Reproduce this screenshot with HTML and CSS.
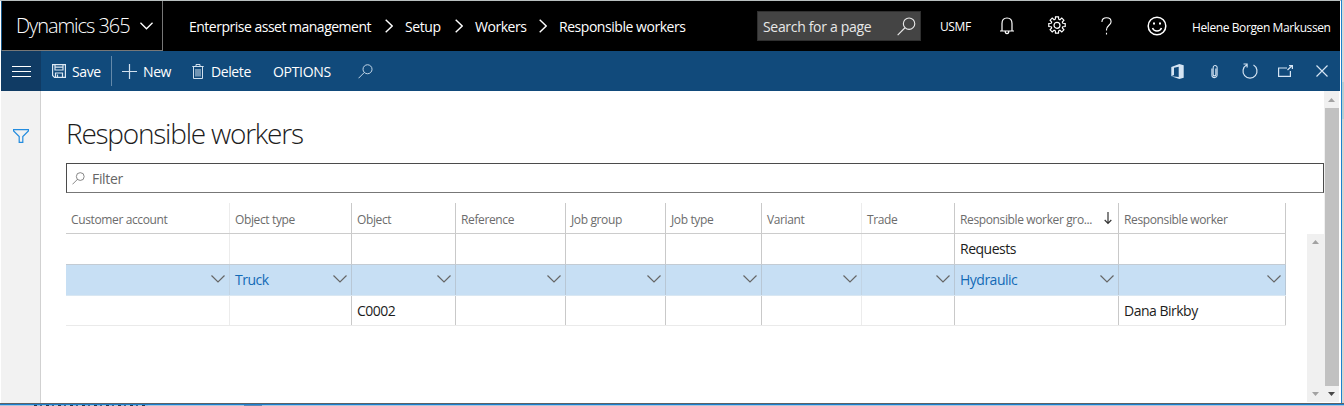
FILE: index.html
```html
<!DOCTYPE html>
<html lang="en">
<head>
<meta charset="utf-8">
<title>Responsible workers</title>
<link rel="stylesheet" href="styles.css">
</head>
<body>
<svg class="defs" width="0" height="0">
  <symbol id="down" viewBox="0 0 14 8"><path d="M.5.5 7 7 13.500.5"/></symbol>
  <symbol id="right" viewBox="0 0 8 14"><path d="M.7.7 7.200 7 .7 13.300"/></symbol>
  <symbol id="search" viewBox="0 0 20 20"><circle cx="12.700" cy="7" r="6"/><path d="M8.400 11.300.7 19"/></symbol>
</svg>
<div class="window">
  <header class="topbar">
    <div class="brand"><span class="brand-name">Dynamics 365</span><svg class="icon brand-arrow"><use href="#down"/></svg></div>
    <nav class="crumbs">
      <span class="c1">Enterprise asset management</span><svg class="icon sep"><use href="#right"/></svg>
      <span class="c2">Setup</span><svg class="icon sep"><use href="#right"/></svg>
      <span class="c3">Workers</span><svg class="icon sep"><use href="#right"/></svg>
      <span class="c4">Responsible workers</span>
    </nav>
    <div class="page-search"><span class="search-label">Search for a page</span><svg class="icon search-icon"><use href="#search"/></svg></div>
    <span class="company">USMF</span>
    <svg class="icon bell" viewBox="0 0 14 18"><path d="M2 14V6.500C2 3 4 1 7 1s5 2 5 5.500V14M0 14h14M5.200 14.300c0 3 3.600 3 3.600 0"/></svg>
    <svg class="icon gear" viewBox="0 0 20 20"><path d="M8.300 3.200 8.500.8h3l.2 2.400 1.200.5 1.900-1.600 2.100 2.100-1.600 1.900.5 1.200 2.400.2v3l-2.400.2-.5 1.200 1.600 1.900-2.100 2.100-1.900-1.600-1.200.5-.2 2.400h-3l-.2-2.400-1.200-.5-1.900 1.600-2.100-2.100 1.600-1.900-.5-1.200-2.400-.2v-3l2.400-.2.5-1.200-1.600-1.900 2.100-2.100 1.900 1.600z"/><circle cx="10" cy="9.300" r="3"/></svg>
    <svg class="icon help" viewBox="0 0 12 20"><path d="M1 5.500C1 2.500 3 1 6 1s5 1.700 5 4.300C11 9 6 9.500 6 14v1M6 17.300v2"/></svg>
    <svg class="icon smile" viewBox="0 0 20 20"><circle cx="10" cy="10" r="8.800"/><path d="M5.500 12c1.500 4 7.500 4 9 0"/><path class="eyes" d="M6 6.500h2v2H6zM12 6.500h2v2h-2z"/></svg>
    <span class="user">Helene Borgen Markussen</span>
  </header>
  <div class="actions">
    <div class="menu"><i></i><i></i><i></i></div>
    <svg class="icon save" viewBox="0 0 14 14"><path d="M.6.6h12.800v12.800H2.500L.6 11.500zM3 .6v5.400h8V.6M3.500 13.400V9h7v4.400M5.500 10.500v3M3 3.200h8"/></svg><span class="save-t">Save</span>
    <span class="rule"></span>
    <svg class="icon plus" viewBox="0 0 15 15"><path d="M7.500 0v15M0 7.500h15"/></svg><span class="new-t">New</span>
    <svg class="icon trash" viewBox="0 0 12 15"><path d="M.3 2.500h11.400M4 2.500v-2h4v2M1.500 2.500v12h9v-12M4 5v7.500M6 5v7.500M8 5v7.500"/></svg><span class="del-t">Delete</span>
    <span class="opt-t">OPTIONS</span>
    <svg class="icon act-search"><use href="#search"/></svg>
    <div class="tools">
      <svg class="office" viewBox="0 0 13 15"><path d="M.3 3 8.300 0 12.700 1.200v12.600L8.300 15 .3 12.200l7.400.7V2.700L3 3.800v7.200L.3 12.200z"/></svg>
      <svg class="icon clip" viewBox="0 0 8 15"><path d="M1 4v7.500c0 4 6 4 6 0V3c0-3-4.500-3-4.500 0v8c0 2 3 2 3 0V4"/></svg>
      <svg class="icon refresh" viewBox="0 0 16 16"><path d="M11.500 2A7 7 0 1 1 4.500 2M1.500 1h3.600v3.600"/></svg>
      <svg class="icon popout" viewBox="0 0 15 12"><path d="M9 3H.6v8.400h11.800V6M9.500 5 14 .7M11 .6H14.400V4"/></svg>
      <svg class="icon close" viewBox="0 0 12 12"><path d="m.5.5 11 11M11.500.5.5 11.500"/></svg>
    </div>
  </div>
  <div class="body">
    <aside class="rail"><svg class="icon funnel" viewBox="0 0 16 14"><path d="M.6.6h14.800v1.300L9.800 7.500v5.900H6.200V7.500L.6 1.900z"/></svg></aside>
    <main class="content">
      <h1>Responsible workers</h1>
      <div class="filter"><svg class="icon filter-icon"><use href="#search"/></svg><span>Filter</span></div>
      <div class="list">
        <div class="grid head">
          <div class="faint"><span>Customer account</span></div><div><span>Object type</span></div><div><span>Object</span></div><div><span>Reference</span></div><div><span>Job group</span></div><div><span>Job type</span></div><div class="faint"><span>Variant</span></div><div><span>Trade</span></div><div><span>Responsible worker gro...</span><svg class="icon sort" viewBox="0 0 8 12"><path d="M4 0v11.200M.7 8 4 11.300 7.300 8"/></svg></div><div><span>Responsible worker</span></div>
        </div>
        <div class="grid row first"><div class="faint"></div><div></div><div></div><div></div><div></div><div></div><div class="faint"></div><div></div><div><span>Requests</span></div><div></div></div>
        <div class="grid row selected">
          <div class="faint"><svg class="icon drop"><use href="#down"/></svg></div>
          <div><span>Truck</span><svg class="icon drop"><use href="#down"/></svg></div>
          <div><svg class="icon drop"><use href="#down"/></svg></div>
          <div><svg class="icon drop"><use href="#down"/></svg></div>
          <div><svg class="icon drop"><use href="#down"/></svg></div>
          <div><svg class="icon drop"><use href="#down"/></svg></div>
          <div class="faint"><svg class="icon drop"><use href="#down"/></svg></div>
          <div><svg class="icon drop"><use href="#down"/></svg></div>
          <div><span>Hydraulic</span><svg class="icon drop"><use href="#down"/></svg></div>
          <div><svg class="icon drop"><use href="#down"/></svg></div>
        </div>
        <div class="grid row last"><div class="faint"></div><div></div><div><span>C0002</span></div><div></div><div></div><div></div><div class="faint"></div><div></div><div></div><div><span>Dana Birkby</span></div></div>
      </div>
    </main>
    <div class="inner-scroll"><b class="up"></b><b class="down"></b></div>
    <div class="outer-scroll"><b class="up"></b><div class="thumb"></div><b class="down dark"></b></div>
  </div>
</div>
<div class="edge"></div>
<div class="strip"><i class="traces"></i><i class="trace-blue"></i></div>
</body>
</html>
```
FILE: styles.css
```css
* { box-sizing: border-box; }
body { margin: 0; width: 1344px; height: 406px; overflow: hidden; background: #fff; font: 14px/20px "Open Sans", "Noto Sans", sans-serif; display: grid; grid-template: 403px 3px / 1341px 3px; }
.defs { position: absolute; }
span { white-space: nowrap; flex: none; }
svg { display: block; flex: none; }
.icon { fill: none; stroke: currentColor; stroke-width: 1.2; overflow: visible; }
.window { border-top: 1px solid #b9bfbf; padding: 0 1px; height: 403px; }
.edge { background: linear-gradient(90deg, #1d82cf 0 1px, transparent 1px), linear-gradient(#d9d9d9 0 82px, #b7cfd1 82px 119px, #d9d4d0 119px); height: 403px; }
.strip { grid-column: 1 / 3; height: 3px; border-top: 1px solid #5d6265; background: linear-gradient(#1b7fd0 0 1px, #abc5dc 1px); display: flex; align-items: flex-end; padding-left: 34px; }
.traces { width: 114px; height: 1px; background: repeating-linear-gradient(90deg, #27384d 0 3px, #9cbddd 3px 6px, #416185 6px 8px, #b7cad8 8px 12px); }
.trace-blue { width: 18px; height: 1px; margin-left: 96px; background: #6289b2; }

.topbar { height: 50px; background: #000; color: #fff; display: flex; align-items: center; }
.brand { width: 162px; height: 50px; border: 1px solid #777; border-width: 0 1px 1px; border-left-color: #17588b; display: flex; align-items: center; padding-left: 14px; }
.brand-name { width: 124px; font-size: 20px; letter-spacing: -1.05px; font-weight: 300; padding-top: 1px; }
.brand-arrow { width: 13px; height: 8px; stroke-width: 1.4; }
.crumbs { display: flex; align-items: center; width: 594px; padding-left: 26px; font-size: 14px; letter-spacing: -.46px; }
.crumbs span { padding-top: 1px; }
.c1 { width: 196px; letter-spacing: -.5px; } .c2 { width: 50px; margin-left: 12px; letter-spacing: -.4px; } .c3 { width: 64px; margin-left: 12px; } .c4 { margin-left: 12px; }
.sep { width: 8px; height: 14px; stroke-width: 1.4; }
.page-search { width: 164px; height: 30px; margin-right: 19px; background: #444; border: 1px solid #303030; display: flex; align-items: center; padding-left: 5px; color: #e8e8e8; }
.search-label { width: 134px; letter-spacing: -.32px; padding-top: 1px; }
.search-icon { width: 19px; height: 19px; }
.company { width: 60px; font-size: 12px; letter-spacing: -.4px; padding-top: 1px; }
.bell { width: 14px; height: 18px; margin-right: 33px; }
.gear { width: 20px; height: 20px; margin-right: 34px; }
.help { width: 11px; height: 20px; margin-right: 35px; }
.smile { width: 20px; height: 20px; margin-right: 25px; stroke-width: 1.5; }
.eyes { fill: #fff; stroke: none; }
.user { font-size: 12px; letter-spacing: -.4px; padding-top: 3px; }

.actions { height: 40px; background: #114a7b; color: #fff; display: flex; align-items: center; letter-spacing: -.4px; }
.menu { width: 40px; height: 40px; background: #103b64; padding: 15px 10px 0 11px; }
.menu i { display: block; height: 1px; margin-bottom: 4px; background: #fff; }
.save { width: 14px; height: 14px; margin-left: 11px; color: #dce8f3; }
.save-t { width: 39px; margin-left: 6px; padding-top: 1px; }
.rule { width: 1px; height: 30px; background: #6389aa; }
.plus { width: 15px; height: 15px; margin-left: 10px; color: #d1e0ee; }
.new-t { width: 44px; margin-left: 6px; padding-top: 1px; }
.trash { width: 12px; height: 15px; margin-left: 5px; color: #d1e0ee; stroke-width: 1; }
.del-t { width: 55px; margin-left: 7px; padding-top: 1px; }
.opt-t { width: 80px; margin-left: 7px; padding-top: 2px; letter-spacing: -.3px; }
.act-search { width: 15px; height: 15px; margin-left: 5px; color: #d5e4f3; }
.tools { width: 169px; margin-left: auto; display: flex; align-items: center; color: #d5e4f3; }
.office { width: 13px; height: 15px; fill: currentColor; margin-right: 27px; }
.clip { width: 7px; height: 15px; margin-right: 24px; }
.refresh { width: 16px; height: 16px; margin-right: 20px; }
.popout { width: 15px; height: 12px; margin-right: 23px; }
.close { width: 12px; height: 12px; }

.body { display: flex; height: 312px; }
.rail { width: 40px; background: #f2f2f2; border-right: 1px solid #d1d1d1; padding: 38px 0 0 12px; color: #238cdf; }
.funnel { width: 16px; height: 14px; }
.content { width: 1283px; padding-left: 25px; }
h1 { margin: 22px 0 0; height: 50px; font-size: 28px; line-height: 40px; font-weight: 300; color: #1c1c1c; letter-spacing: -1.23px; }
.filter { height: 30px; width: 1258px; border: 1px solid #4b4b4b; border-bottom-color: #777; display: flex; align-items: center; padding-left: 5px; color: #666; letter-spacing: -.35px; }
.filter-icon { width: 13px; height: 13px; margin-right: 7px; }
.filter span { padding-top: 2px; }
.list { width: 1220px; margin-top: 10px; }
.grid { display: grid; grid-template-columns: 164px 122px 104px 110px 100px 96px 100px 93px 164px 167px; }
.grid > div { border-right: 1px solid #c9c9c9; padding-left: 5px; display: flex; align-items: center; }
.grid > .faint { border-right-color: #ececec; }
.head { height: 31px; border-bottom: 1px solid #ccc; font-size: 12px; color: #6c6c6c; letter-spacing: -.37px; }
.head span { padding-top: 3px; }
.row { height: 31px; color: #1c1c1c; letter-spacing: -.5px; border-bottom: 1px solid #eaeaea; }
.first { border-bottom-color: #c3cbd3; }
.selected { background: #c7dff4; color: #126ab6; border-bottom-color: #d9e7f2; }
.selected > div { border-right-color: #b8c7d5; }
.selected > .faint { border-right-color: #c1d4e5; }
.last { height: 30px; }
.last span { padding-top: 1px; }
.drop { width: 14px; height: 8px; margin: 0 4px 2px auto; color: #666; }
.sort { width: 8px; height: 12px; margin: 0 6px 0 auto; color: #333; }
.inner-scroll { width: 17px; margin-left: -17px; margin-top: 143px; height: 168px; background: #f0f0f0; display: flex; flex-direction: column; align-items: center; justify-content: space-between; padding: 6px 0; }
.outer-scroll { width: 15px; height: 311px; background: #f0f0f0; display: flex; flex-direction: column; align-items: center; padding: 7px 0; }
.thumb { width: 14px; height: 278px; margin: 6px 0 6px; background: #c1c1c1; flex: none; }
.up, .down { width: 7px; height: 4px; background: #a2a2a2; clip-path: polygon(50% 0, 100% 100%, 0 100%); flex: none; }
.down { clip-path: polygon(0 0, 100% 0, 50% 100%); }
.dark { background: #484848; }
```
